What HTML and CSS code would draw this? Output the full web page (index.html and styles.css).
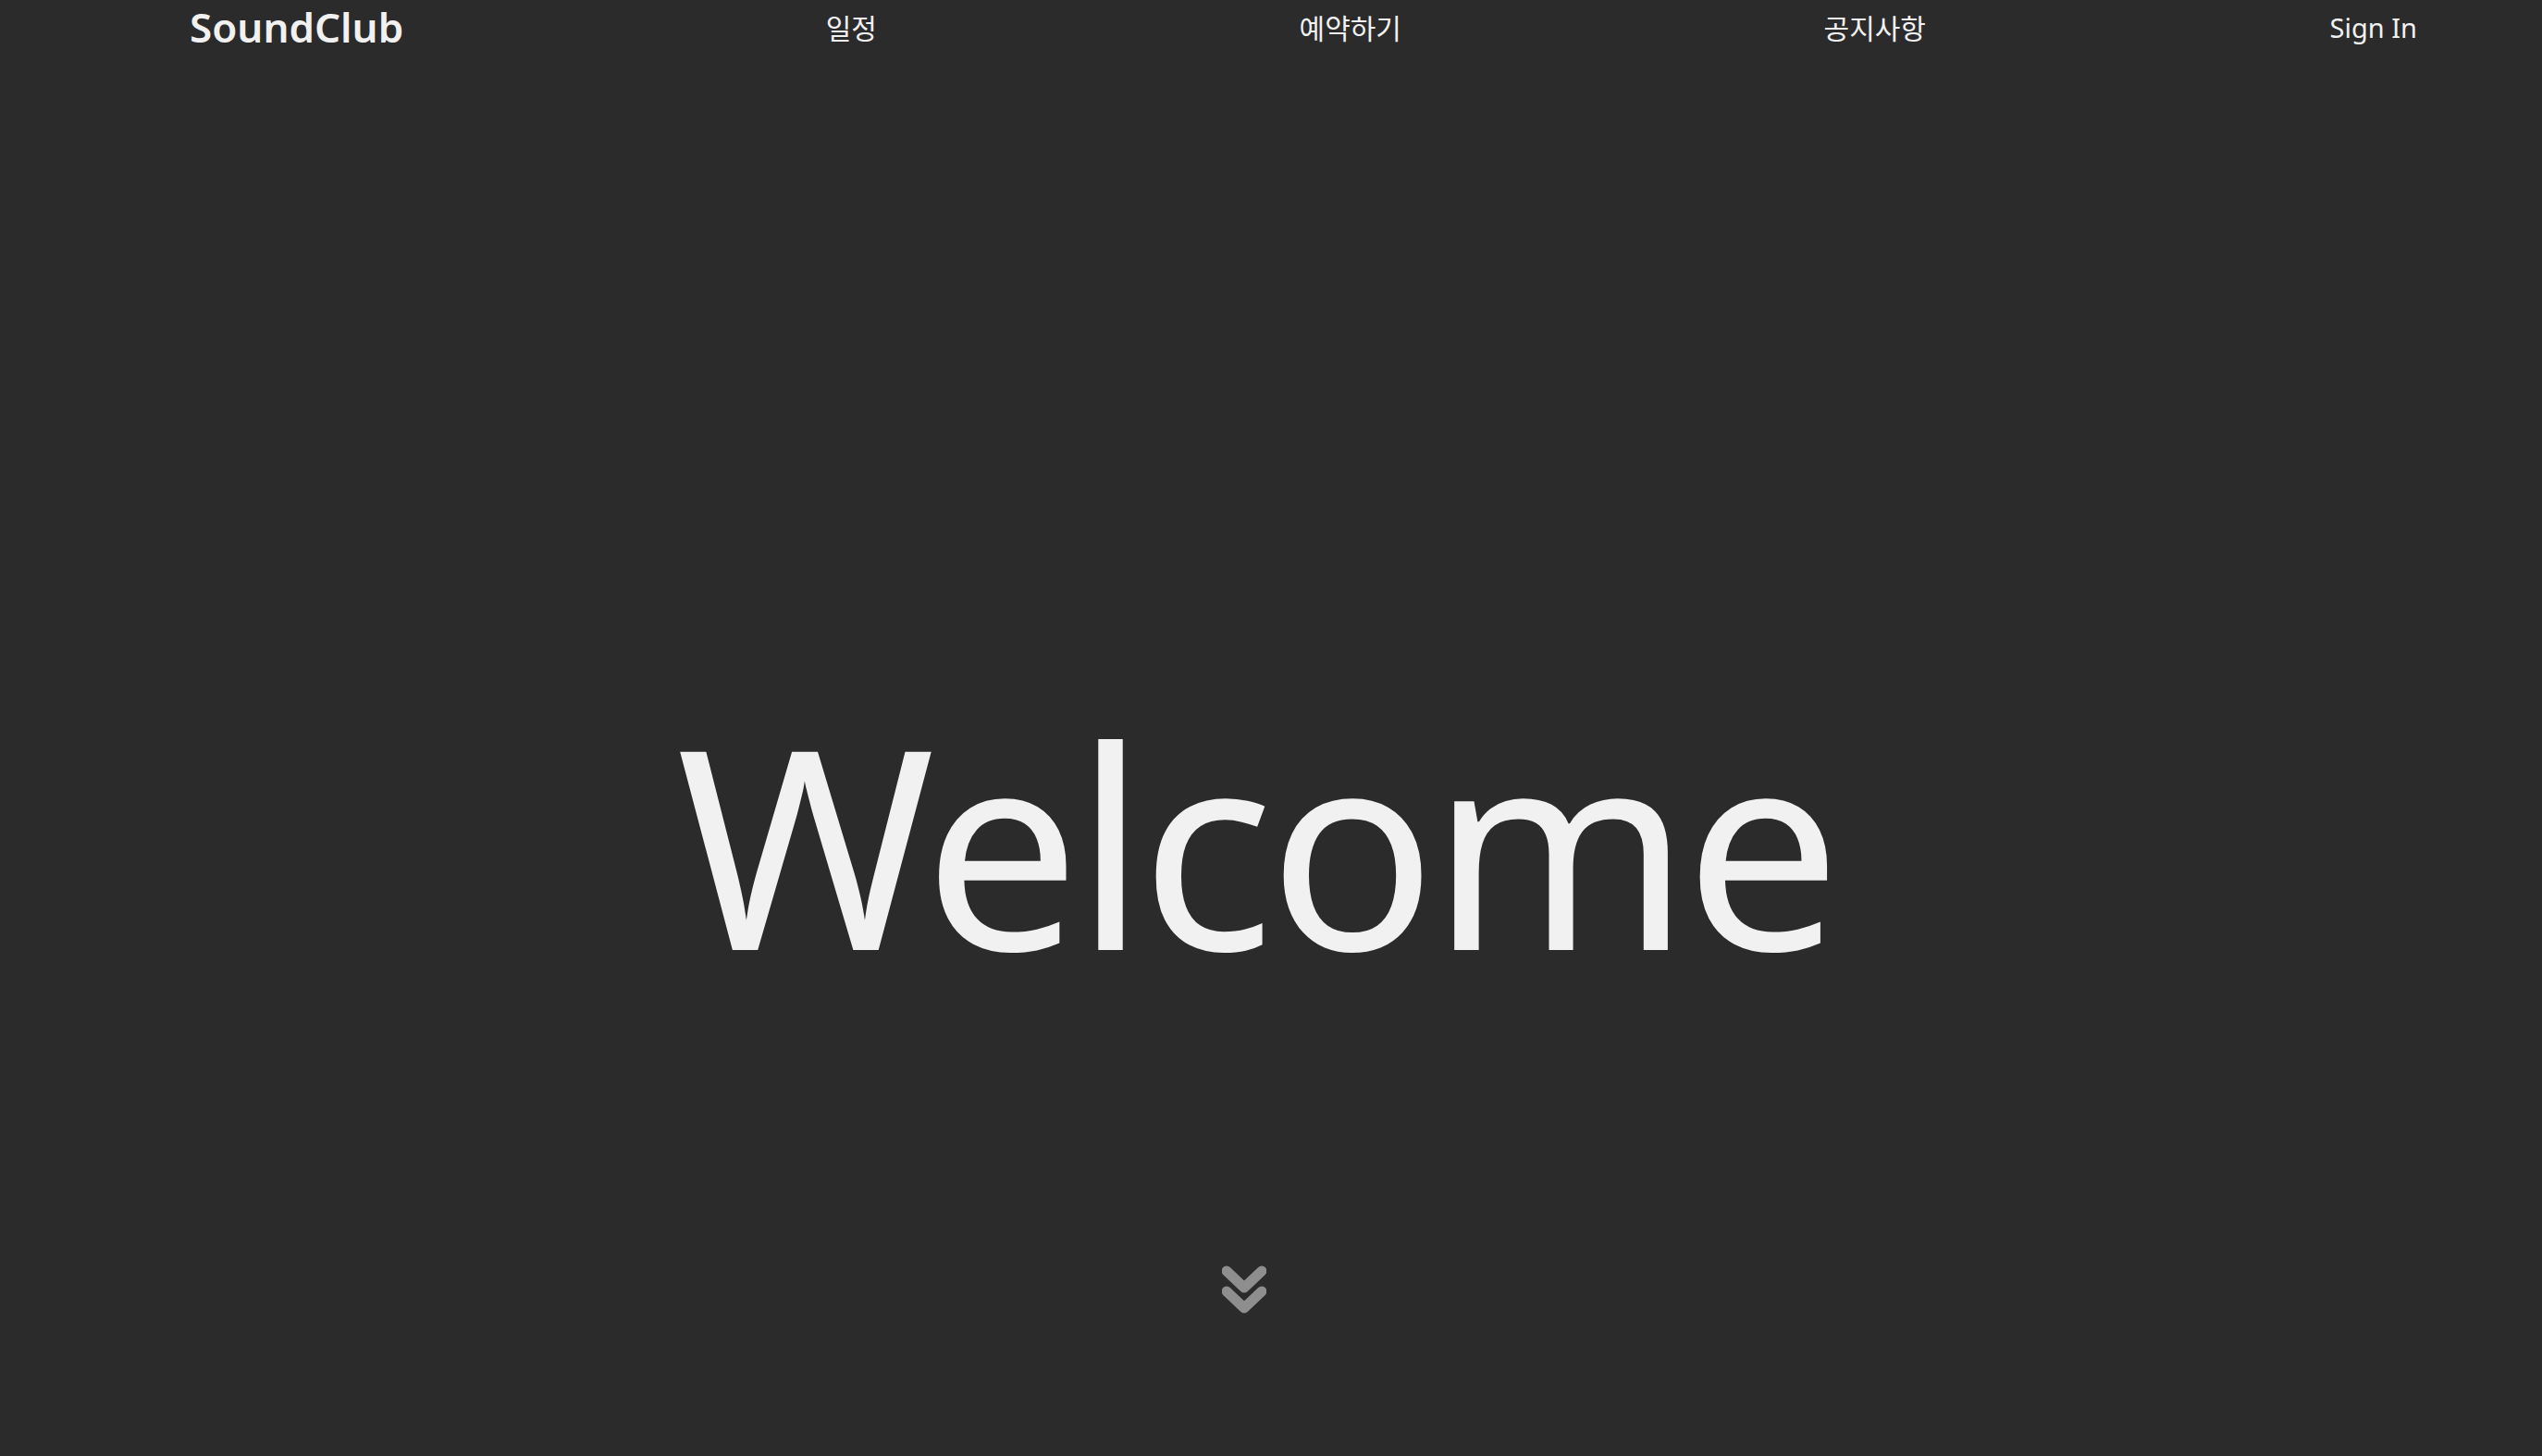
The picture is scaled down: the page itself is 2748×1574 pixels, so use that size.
FILE: index.html
```html
<!DOCTYPE html>
<html lang="ko">
<head>
<meta charset="utf-8">
<title>SoundClub</title>
<link rel="stylesheet" href="styles.css">
</head>
<body>
<header class="nav">
  <a class="logo" href="#">SoundClub</a>
  <a class="nav-link ko" href="#">일정</a>
  <a class="nav-link ko" href="#">예약하기</a>
  <a class="nav-link ko" href="#">공지사항</a>
  <a class="nav-link latin" href="#">Sign In</a>
</header>
<main class="hero">
  <h1 class="welcome">Welcome</h1>
  <div class="scroll-down">
    <svg width="48" height="52" viewBox="0 0 48 52" fill="none" stroke="#8e8e8e" stroke-width="11" stroke-linecap="round" stroke-linejoin="round">
      <polyline points="5,6 24,24 43,6"/>
      <polyline points="5,28 24,46 43,28"/>
    </svg>
  </div>
</main>
</body>
</html>
```

FILE: styles.css
```css
html, body {
  margin: 0;
  padding: 0;
  background: #2b2b2b;
  color: #f1f1f1;
  font-family: "Noto Sans", "Noto Sans CJK KR", sans-serif;
}
a { color: inherit; text-decoration: none; }
.nav {
  height: 58px;
  display: flex;
  align-items: center;
  justify-content: space-between;
  padding: 0 135px 0 205px;
}
.logo {
  font-size: 44px;
  font-weight: 600;
}
.nav-link {
  font-size: 30px;
}
.ko {
  padding-left: 20px;
}
.latin {
  font-size: 29px;
}
.hero {
  height: 1516px;
  display: flex;
  flex-direction: column;
  align-items: center;
  padding-right: 32px;
}
.welcome {
  margin: 703px 0 0;
  font-size: 300px;
  font-weight: 400;
  letter-spacing: -6px;
  line-height: 1;
}
.scroll-down {
  margin: 307px 26px 0 0;
  display: flex;
}
```
